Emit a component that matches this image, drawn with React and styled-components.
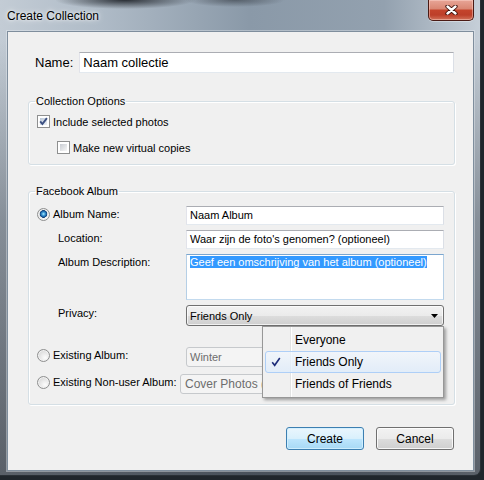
import React from 'react'
import styled, { createGlobalStyle } from 'styled-components'

const GlobalStyle = createGlobalStyle`
    html, body {
        margin: 0;
        padding: 0;
    }
    body {
        width: 484px;
        height: 480px;
        overflow: hidden;
        background: #20262c;
        font-family: "Liberation Sans", Arial, sans-serif;
        color: #000;
    }
`

const WINDOW = styled.div`
    box-sizing: border-box;
    width: 481px;
    height: 476px;
    display: flex;
    flex-direction: column;
    padding: 0 6px 4px 7px;
    border-right: 1px solid #2a3036;
    border-bottom: 1px solid #2a3036;
    border-bottom-right-radius: 7px;
    background:
        radial-gradient(ellipse 70px 9px at 125px 0, rgba(28, 32, 38, 0.9), rgba(28, 32, 38, 0)),
        radial-gradient(ellipse 50px 7px at 235px 0, rgba(40, 45, 52, 0.55), rgba(40, 45, 52, 0)),
        linear-gradient(180deg, rgba(60, 68, 78, 0) 40px, rgba(60, 68, 78, 0.45) 220px, rgba(45, 50, 58, 0.7) 100%),
        linear-gradient(90deg, #c3ccd5 0, #b0bcc8 20%, #8a99a8 52%, #93a1af 80%, #c6cfd8 100%);
`

const TITLE_BAR = styled.div`
    flex: none;
    height: 31px;
    display: flex;
    justify-content: space-between;
    align-items: flex-start;
`

const TITLE = styled.div`
    padding-top: 9px;
    font-size: 12px;
    line-height: 15px;
    text-shadow: 0 0 6px rgba(255, 255, 255, 0.9), 0 0 3px rgba(255, 255, 255, 0.8);
`

const CLOSE_BUTTON = styled.div`
    box-sizing: border-box;
    width: 46px;
    height: 21px;
    display: flex;
    align-items: center;
    justify-content: center;
    border: 1px solid #4a1a14;
    border-top: none;
    border-radius: 0 0 5px 5px;
    box-shadow: inset 0 0 0 1px rgba(255, 220, 210, 0.45), 0 1px 0 rgba(255, 255, 255, 0.35);
    background: linear-gradient(180deg, #e8a597 0, #d98672 45%, #c4442c 50%, #bd3f29 75%, #d2725a 100%);
`

const CLIENT = styled.div`
    flex: 1;
    box-sizing: border-box;
    display: flex;
    flex-direction: column;
    background: #f0f0f0;
    border: 1px solid #7f8e9d;
    box-shadow: 0 0 0 1px rgba(235, 240, 245, 0.4);
    padding: 20px 18px 0 20px;
`

const NAME_ROW = styled.div`
    display: flex;
    align-items: center;
    gap: 6px;
    height: 21px;
    padding: 0 1px 0 7px;
    font-size: 13px;
`

const TEXT_BOX = styled.div`
    box-sizing: border-box;
    flex: 1;
    height: ${(props) => props.$height || 19}px;
    padding: ${(props) => (props.$multi ? '1px 3px' : '0 3px')};
    line-height: ${(props) => (props.$multi ? '13px' : `${(props.$height || 19) - 2}px`)};
    font-size: ${(props) => props.$size || 11}px;
    background: #fff;
    border: 1px solid;
    border-color: ${(props) => (props.$focused ? '#7ba6cf #b5cfe6 #c3daee #b5cfe6' : '#abadb3 #dbdfe6 #e3e9ef #e2e3ea')};
    white-space: nowrap;
    overflow: hidden;
`

const SELECTED = styled.span`
    background: #3399ff;
    color: #fff;
`

const GROUP = styled.fieldset`
    margin: ${(props) => props.$top}px 0 0;
    padding: ${(props) => props.$padding};
    min-width: 0;
    border: 1px solid #d5dfe5;
    border-radius: 3px;
    box-shadow: inset 1px 1px 0 #fff, 1px 1px 0 #fff;
    display: flex;
    flex-direction: column;
`

const LEGEND = styled.legend`
    padding: 0 1px;
    margin-left: -2px;
    font-size: 11px;
    line-height: 13px;
`

const OPTION_ROW = styled.div`
    display: flex;
    align-items: center;
    gap: 3px;
    height: 15px;
    margin-top: ${(props) => props.$gap || 0}px;
    padding-left: ${(props) => props.$indent || 0}px;
    font-size: 11px;
`

const CHECK_BOX = styled.span`
    box-sizing: border-box;
    flex: none;
    width: 13px;
    height: 13px;
    padding: 2px;
    border: 1px solid #8e8f8f;
    background: ${(props) =>
        props.$checked
            ? 'linear-gradient(135deg, #b9c6d6, #eef2f7) content-box, #fff'
            : 'linear-gradient(135deg, #c8ccd2, #f7f7f7) content-box, #fff'};
    svg {
        display: block;
        margin: -2px;
    }
`

const FIELD_ROW = styled.div`
    display: flex;
    align-items: flex-start;
    margin-top: ${(props) => props.$gap || 0}px;
    font-size: 11px;
`

const LABEL_CELL = styled.div`
    flex: none;
    box-sizing: border-box;
    width: ${(props) => props.$width || 149}px;
    display: flex;
    align-items: center;
    gap: 3px;
    padding-top: 1px;
    padding-left: ${(props) => props.$indent || 0}px;
    line-height: 14px;
    white-space: nowrap;
`

const RADIO = styled.span`
    box-sizing: border-box;
    flex: none;
    width: 13px;
    height: 13px;
    border-radius: 50%;
    border: 1px solid #8e8f8f;
    box-shadow: inset 0 0 0 1px #f2f2f2;
    background: ${(props) =>
        props.$checked
            ? 'radial-gradient(circle at 50% 45%, #b4ecff 0, #49a6dc 1.4px, #1a62a8 2.8px, #0d3d72 3.6px, rgba(13,61,114,0) 4.1px), radial-gradient(circle at 65% 70%, #fdfdfd, #d5d5d5 85%)'
            : 'radial-gradient(circle at 65% 70%, #fdfdfd, #d5d5d5 85%)'};
`

const SELECT_WRAP = styled.div`
    position: relative;
    flex: 1;
`

const SELECT = styled.div`
    box-sizing: border-box;
    height: 21px;
    display: flex;
    align-items: center;
    justify-content: space-between;
    padding: 0 5px 0 3px;
    border: 1px solid #707070;
    border-radius: 3px;
    box-shadow: inset 0 0 0 1px rgba(255, 255, 255, 0.7);
    background: linear-gradient(180deg, #f2f2f2 0, #ebebeb 50%, #dddddd 51%, #cfcfcf 100%);
`

const DISABLED_COMBO = styled.div`
    box-sizing: border-box;
    flex: 1;
    height: 20px;
    padding-left: ${(props) => props.$pad}px;
    line-height: 18px;
    color: #6d6d6d;
    background: #f4f4f4;
    border: 1px solid #c6c9cc;
    border-radius: 3px;
    white-space: nowrap;
    overflow: hidden;
    font-size: ${(props) => props.$size || 11}px;
`

const MENU = styled.div`
    position: absolute;
    top: 100%;
    left: 76px;
    z-index: 2;
    box-sizing: border-box;
    width: 182px;
    padding: 2px;
    border: 1px solid #979797;
    box-shadow: 2px 2px 3px rgba(0, 0, 0, 0.35);
    background:
        linear-gradient(90deg, rgba(0,0,0,0) 27px, #e2e3e3 27px, #e2e3e3 28px, #fff 28px, #fff 29px, rgba(0,0,0,0) 29px),
        #f0f0f0;
`

const MENU_ITEM = styled.div`
    box-sizing: border-box;
    height: 22px;
    display: flex;
    align-items: center;
    font-size: 12px;
    border: 1px solid ${(props) => (props.$active ? '#aecff7' : 'transparent')};
    border-radius: 3px;
    background: ${(props) => (props.$active ? 'linear-gradient(180deg, rgba(241,247,254,0.7), rgba(220,235,252,0.7))' : 'none')};
`

const CHECK_CELL = styled.span`
    flex: none;
    box-sizing: border-box;
    width: 29px;
    padding-left: 5px;
    display: flex;
    align-items: center;
`

const BUTTON_ROW = styled.div`
    display: flex;
    justify-content: flex-end;
    gap: 12px;
    margin-top: 22px;
    padding-right: 1px;
`

const BUTTON = styled.div`
    box-sizing: border-box;
    width: 78px;
    height: 23px;
    display: flex;
    align-items: center;
    justify-content: center;
    font-size: 12px;
    border-radius: 3px;
    border: 1px solid ${(props) => (props.$primary ? '#3c7fb1' : '#707070')};
    box-shadow: inset 0 0 0 1px ${(props) => (props.$primary ? 'rgba(210,240,255,0.9)' : 'rgba(255,255,255,0.8)')};
    background: ${(props) =>
        props.$primary
            ? 'linear-gradient(180deg, #eaf6fd 0, #d9f0fc 50%, #bee6fd 51%, #a7d9f5 100%)'
            : 'linear-gradient(180deg, #f2f2f2 0, #ebebeb 50%, #dddddd 51%, #cfcfcf 100%)'};
`

function CloseGlyph() {
    return (
        <svg width="13" height="10" viewBox="0 0 13 10">
            <path d="M2.5 1.5 L10.5 8.5 M10.5 1.5 L2.5 8.5" stroke="#3a0c06" strokeWidth="4.2" strokeLinecap="round" />
            <path d="M2.5 1.5 L10.5 8.5 M10.5 1.5 L2.5 8.5" stroke="#fff" strokeWidth="2.4" strokeLinecap="round" />
        </svg>
    )
}

function Check({checked}) {
    return (
        <CHECK_BOX $checked={checked}>
            {checked ?
                <svg width="11" height="11" viewBox="0 0 11 11">
                    <path d="M2.2 5.4 L4.4 8 L8.9 2.2" fill="none" stroke="#3b4f82" strokeWidth="1.9" />
                </svg>
                : null}
        </CHECK_BOX>
    )
}

function MenuCheck() {
    return (
        <svg width="10" height="10" viewBox="0 0 10 10">
            <path d="M1.2 5.2 L3.7 8.3 L8.8 1" fill="none" stroke="#1d2c7a" strokeWidth="1.6" />
        </svg>
    )
}

function PrivacyMenu() {
    // the open list of the Privacy combo, drawn over the rows below it
    const options = ['Everyone', 'Friends Only', 'Friends of Friends']
    return (
        <MENU>
            {options.map((option) => {
                const active = option === 'Friends Only'
                return (
                    <MENU_ITEM key={option} $active={active}>
                        <CHECK_CELL>{active ? <MenuCheck /> : null}</CHECK_CELL>
                        {option}
                    </MENU_ITEM>
                )
            })}
        </MENU>
    )
}

export default function App() {
    return (
        <>
            <GlobalStyle />
            <WINDOW>
                <TITLE_BAR>
                    <TITLE>Create Collection</TITLE>
                    <CLOSE_BUTTON><CloseGlyph /></CLOSE_BUTTON>
                </TITLE_BAR>
                <CLIENT>
                    <NAME_ROW>
                        <span>Name:</span>
                        <TEXT_BOX $height={21} $size={13}>Naam collectie</TEXT_BOX>
                    </NAME_ROW>

                    <GROUP $top={22} $padding="6px 8px 9px 8px">
                        <LEGEND>Collection Options</LEGEND>
                        <OPTION_ROW>
                            <Check checked />
                            Include selected photos
                        </OPTION_ROW>
                        <OPTION_ROW $gap={11} $indent={20}>
                            <Check />
                            Make new virtual copies
                        </OPTION_ROW>
                    </GROUP>

                    <GROUP $top={20} $padding="8px 10px 10px 8px">
                        <LEGEND>Facebook Album</LEGEND>
                        <FIELD_ROW>
                            <LABEL_CELL><RADIO $checked />Album Name:</LABEL_CELL>
                            <TEXT_BOX>Naam Album</TEXT_BOX>
                        </FIELD_ROW>
                        <FIELD_ROW $gap={5}>
                            <LABEL_CELL $indent={21}>Location:</LABEL_CELL>
                            <TEXT_BOX>Waar zijn de foto's genomen? (optioneel)</TEXT_BOX>
                        </FIELD_ROW>
                        <FIELD_ROW $gap={5}>
                            <LABEL_CELL $indent={21}>Album Description:</LABEL_CELL>
                            <TEXT_BOX $height={46} $multi $focused>
                                <SELECTED>Geef een omschrijving van het album (optioneel)</SELECTED>
                            </TEXT_BOX>
                        </FIELD_ROW>
                        <FIELD_ROW $gap={5}>
                            <LABEL_CELL $indent={21}>Privacy:</LABEL_CELL>
                            <SELECT_WRAP>
                                <SELECT>
                                    <span>Friends Only</span>
                                    <svg width="7" height="4" viewBox="0 0 7 4">
                                        <polygon points="0,0 7,0 3.5,4" fill="#000" />
                                    </svg>
                                </SELECT>
                                <PrivacyMenu />
                            </SELECT_WRAP>
                        </FIELD_ROW>
                        <FIELD_ROW $gap={21}>
                            <LABEL_CELL><RADIO />Existing Album:</LABEL_CELL>
                            <DISABLED_COMBO $pad={3}>Winter</DISABLED_COMBO>
                        </FIELD_ROW>
                        <FIELD_ROW $gap={7}>
                            <LABEL_CELL $width={143}><RADIO />Existing Non-user Album:</LABEL_CELL>
                            <DISABLED_COMBO $pad={4} $size={12}>Cover Photos (M</DISABLED_COMBO>
                        </FIELD_ROW>
                    </GROUP>

                    <BUTTON_ROW>
                        <BUTTON $primary>Create</BUTTON>
                        <BUTTON>Cancel</BUTTON>
                    </BUTTON_ROW>
                </CLIENT>
            </WINDOW>
        </>
    )
}
